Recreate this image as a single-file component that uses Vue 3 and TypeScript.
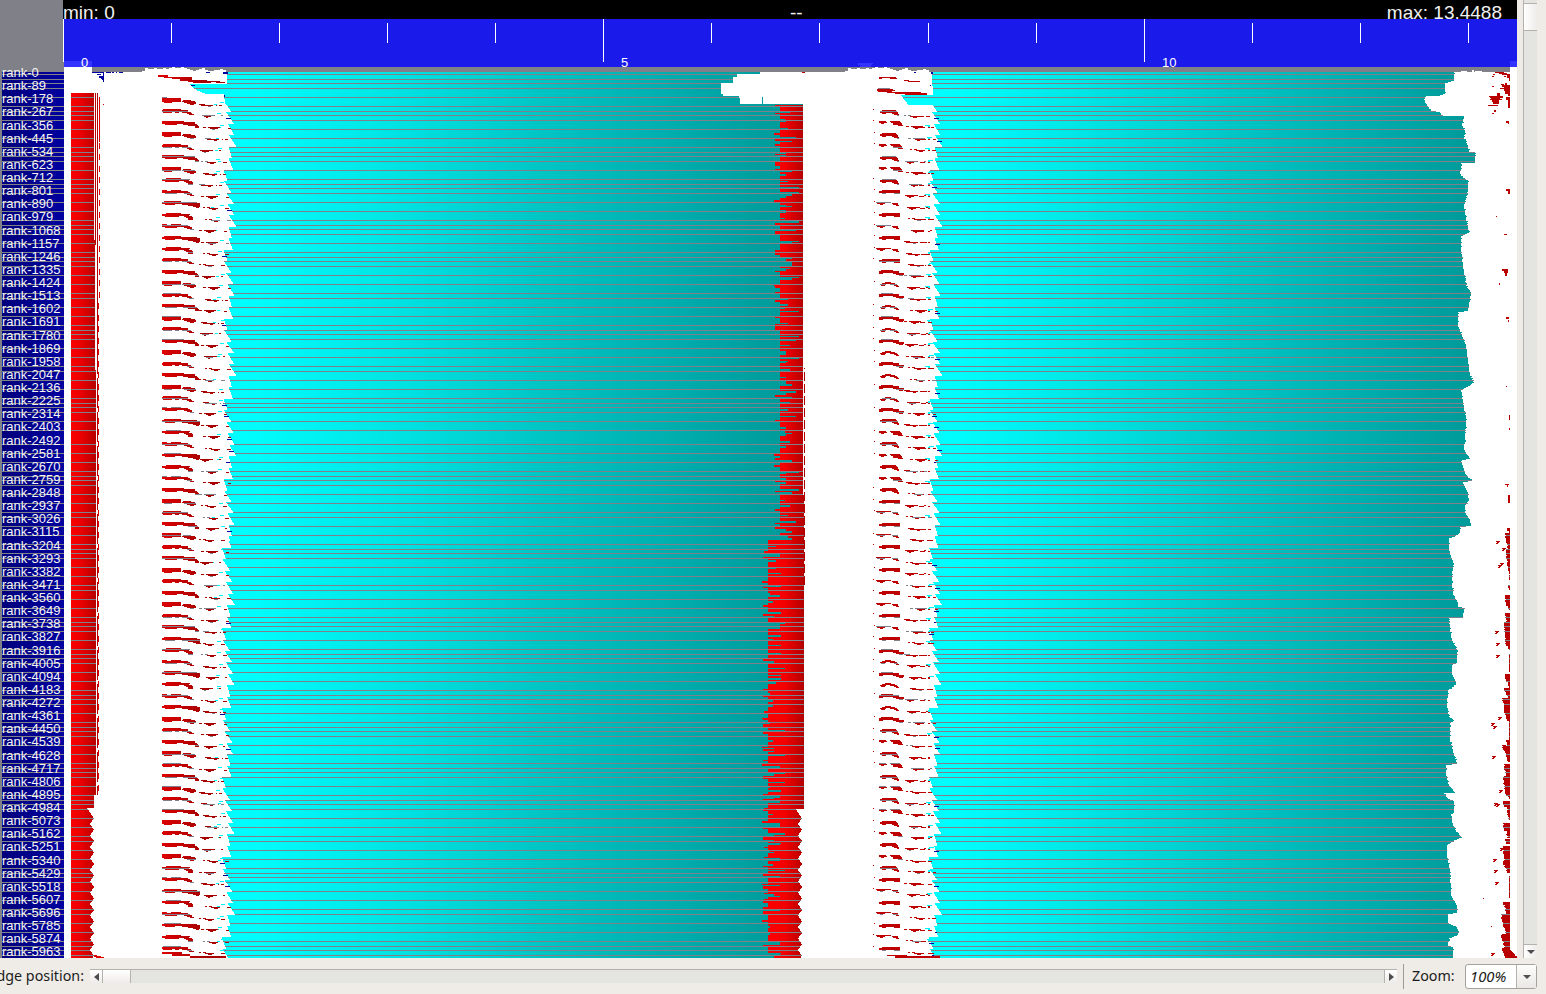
<script setup lang="ts">
type Box = [number, number, number, number]
type Point = [number, number]

const TOP = 72
const BOTTOM = 958
const TOOTH = 11.46

const rankLabels = Array.from({ length: 68 }, (_, i) => `rank-${i * 89}`)

const rows = [
  74, 79, 83, 88, 97, 106, 111, 115, 120, 129, 138, 147, 152, 156, 161, 170, 179, 184, 188, 193, 202, 211, 220, 225,
  229, 234, 243, 252, 257, 261, 266, 275, 284, 293, 298, 307, 316, 325, 330, 334, 339, 348, 357, 366, 371, 380, 389,
  398, 403, 407, 412, 421, 430, 444, 453, 462, 471, 476, 480, 485, 494, 503, 512, 517, 526, 535, 544, 549, 553, 558,
  567, 576, 585, 590, 599, 608, 617, 622, 626, 631, 640, 649, 654, 658, 663, 672, 681, 690, 695, 699, 704, 713, 722,
  727, 731, 736, 745, 754, 763, 768, 772, 777, 786, 795, 800, 804, 809, 818, 827, 836, 841, 850, 859, 868, 873, 877,
  882, 891, 900, 909, 914, 923, 932, 941, 946, 950, 955,
]
const rowSet = new Set(rows)

const ticks = Array.from({ length: 14 }, (_, i) => ({
  x: Math.round(63 + i * 108.065),
  major: i % 5 === 0,
}))
const tickLabels = [
  { x: 81, text: '0' },
  { x: 621, text: '5' },
  { x: 1162, text: '10' },
]

function toPath(boxes: Box[]): string {
  return boxes.map(([x, y, w, h]) => `M${x} ${y}h${w}v${h}h${-w}z`).join('')
}

let seed = 7
function rnd(): number {
  seed = (seed * 16807) % 2147483647
  return seed / 2147483647
}
function pick<T>(items: T[]): T {
  return items[Math.floor(rnd() * items.length)]
}

function interpolate(points: Point[], y: number): number {
  for (let i = 1; i < points.length; i++) {
    const [y0, x0] = points[i - 1]
    const [y1, x1] = points[i]
    if (y < y1) return x0 + ((x1 - x0) * (y - y0)) / (y1 - y0)
  }
  return points[points.length - 1][1]
}

// Sawtooth front where the long cyan intervals start
const teeth: Point[] = [[9, 12.5], [9, 13.5], [4, 8], [4.5, 12], [6.5, 14.5], [8, 15], [9.5, 17]]
function front(y: number): number {
  const position = (y - 140.5) / TOOTH + 66.5
  const k = Math.floor(position)
  const f = position - k
  const phase = Math.floor(((k % 6.65) + 6.65) % 6.65)
  const [a, b] = teeth[phase]
  const drift = y > 540 ? -1.5 : 0
  return Math.round(219.5 + a + (b - a) * f + drift)
}

// Ends of the second cyan phase
const tail: Point[] = [
  [72, 1454], [80, 1454], [81, 1451], [83, 1445], [93, 1445], [95, 1440], [96, 1425], [101, 1424], [105, 1427],
  [110, 1431], [112, 1440], [115, 1442], [116, 1464], [125, 1462], [130, 1465], [138, 1464],
  [143, 1467], [151, 1469], [152, 1475], [162, 1475], [163, 1461], [175, 1460], [180, 1468], [190, 1468],
  [205, 1464], [218, 1466], [232, 1469], [236, 1461], [250, 1461], [265, 1463], [285, 1466], [292, 1471],
  [310, 1468], [312, 1458], [325, 1458], [335, 1462], [345, 1466], [360, 1468], [375, 1470], [382, 1474],
  [390, 1461], [402, 1463], [420, 1466], [450, 1464], [458, 1470], [460, 1461], [475, 1466], [480, 1472],
  [482, 1463], [491, 1467], [500, 1469], [505, 1465], [512, 1465], [520, 1470], [525, 1471], [527, 1460],
  [533, 1459], [536, 1455], [538, 1449], [545, 1449], [556, 1450], [560, 1453], [580, 1452], [595, 1453],
  [600, 1457], [606, 1458], [608, 1464], [617, 1463], [618, 1449], [629, 1450], [640, 1452], [645, 1455],
  [651, 1457], [662, 1457], [664, 1452], [673, 1452], [680, 1455], [684, 1455], [687, 1452], [690, 1448],
  [705, 1447], [716, 1449], [720, 1454], [723, 1450], [740, 1450], [746, 1452], [755, 1454], [763, 1457],
  [765, 1446], [775, 1446], [785, 1449], [792, 1455], [793, 1444], [798, 1448], [801, 1454], [812, 1454],
  [814, 1451], [825, 1453], [832, 1457], [837, 1462], [840, 1454], [845, 1447], [855, 1447], [870, 1450],
  [895, 1451], [905, 1457], [912, 1457], [914, 1448], [923, 1448], [926, 1456], [932, 1459], [935, 1457],
  [938, 1449], [945, 1448], [947, 1453], [958, 1453],
]

const cyanLeft: Box[] = []
const cyanRight: Box[] = []
const redLeft: Box[] = []
const redMiddle: Box[] = []
const redRight: Box[] = []
const fragments: Box[] = []
const cyanBits: Box[] = []
const navyBits: Box[] = []
const grey: Box[] = []

function leftStart(y: number): number {
  if (y < 84) return 227
  if (y < 90) return Math.round(190 + (y - 84) * 1.1)
  if (y < 94) return Math.round(197 + (y - 90) * 2.5)
  return y < 105 ? 224 + Math.floor((y - 94) / 5) : front(y)
}
function leftEnd(y: number): number {
  if (y < 74) return 760
  if (y < 77) return 737
  if (y < 83) return 733
  if (y < 96) return 721 + (y > 93 ? 2 : 0)
  if (y < 105) return y < 98 ? 739 : y < 104 ? 740 : 748
  return 803
}
function rightStart(y: number): number {
  if (y < 86) return 932
  if (y < 95) return 933
  if (y < 105) return Math.round(901 + (y - 95) * 0.8)
  return front(y) + 706 - (y > 540 ? -1 : 0)
}

let jag = 780
let jagLeft = 0
for (let y = TOP; y < BOTTOM; y++) {
  const a = leftStart(y)
  const b = leftEnd(y)
  const c = rightStart(y)
  const d = Math.round(interpolate(tail, y) + (rnd() > 0.82 ? 1 : 0))
  cyanLeft.push([a, y, b - a, 1])
  cyanRight.push([c, y, d - c, 1])

  const wave = Math.abs((((y - 812) / TOOTH) % 1) - 0.5) * 2
  const sawEdge = y < 808 ? 0 : Math.round(4 - wave * 4)
  let leftEdge = 0
  if (y >= 93) {
    leftEdge = y < 240 ? 94 : y < 370 ? 95 : 96
    if (y >= 795) leftEdge = y < 808 ? 94 : 90 + sawEdge
    redLeft.push([71, y, leftEdge - 71, 1])
    if (y < 245) redLeft.push([95, y, 1, 1])
    if (y < 795 && (y < 370 || (y % 34) > 3)) redLeft.push([97, y, 1, 1])
  }

  if (y >= 105) {
    if (jagLeft <= 0) {
      const late = y > 538
      const base = late ? 768 : 780
      const wasBase = jag === base
      jag = wasBase
        ? pick(late ? [762, 764, 770, 773, 776, 781, 785, 763] : [774, 775, 785, 788, 790, 796, 799, 786])
        : pick([base, base, base, base + 6, base + 12, base - 5])
      jagLeft = jag === base ? 2 + Math.floor(rnd() * 5) : 1 + Math.floor(rnd() * 2)
    }
    jagLeft--
    const end = y < 495 ? 803 : y < 809 ? 804 : 798 + sawEdge
    if (end < 803) cyanLeft[cyanLeft.length - 1] = [a, y, end - a, 1]
    redMiddle.push([jag, y, end - jag, 1])
    if (y > 367 && y < 585 && y % 12 < 9) redMiddle.push([804, y, 1, 1])
  }

  if (rowSet.has(y)) {
    const end = y < 105 ? b : y < 495 ? 803 : y < 809 ? 804 : 798 + sawEdge
    grey.push([a, y, end - a, 1], [c, y, d - c, 1])
    if (leftEdge) grey.push([71, y, leftEdge - 71, 1])
  }
}

// Communication bursts, one per tooth
const headShapes: Box[][] = [
  [[0, 0, 19, 1], [0, 1, 19, 3], [2, 4, 8, 1], [21, 2, 8, 1], [20, 3, 13, 1], [22, 4, 12, 1], [25, 5, 9, 1], [28, 6, 4, 1]],
  [[4, 0, 15, 1], [0, 1, 28, 1], [0, 2, 27, 1], [3, 3, 14, 1], [22, 3, 8, 1], [24, 4, 7, 1], [26, 5, 5, 2]],
  [[1, 0, 18, 1], [0, 1, 26, 2], [1, 3, 9, 1], [13, 3, 4, 1], [20, 3, 9, 1], [25, 4, 5, 1], [27, 5, 5, 1]],
  [[0, 0, 5, 1], [9, 0, 10, 1], [0, 1, 26, 1], [0, 2, 28, 1], [3, 3, 12, 1], [22, 3, 8, 1], [25, 4, 5, 1], [28, 5, 4, 1]],
  [[0, 0, 22, 1], [0, 1, 33, 2], [3, 3, 12, 1], [21, 3, 14, 1], [26, 4, 10, 1], [33, 5, 4, 2]],
  [[2, 0, 17, 1], [0, 1, 35, 1], [0, 2, 38, 1], [3, 3, 10, 1], [20, 3, 18, 1], [26, 4, 12, 1], [31, 5, 7, 1], [34, 6, 3, 1]],
]
const middleShapes: Box[][] = [
  [[3, 0, 14, 1], [1, 1, 17, 1], [1, 2, 18, 1], [3, 3, 4, 1], [13, 3, 6, 1], [15, 4, 5, 1], [18, 5, 2, 1]],
  [[6, 0, 6, 1], [3, 1, 13, 1], [1, 2, 6, 1], [11, 2, 7, 1], [2, 3, 4, 1], [15, 3, 4, 1], [17, 4, 3, 1]],
  [[3, 0, 18, 1], [0, 1, 21, 2], [3, 3, 4, 1], [15, 3, 6, 1]],
  [[0, 0, 7, 1], [11, 0, 10, 1], [0, 1, 8, 1], [12, 1, 10, 1], [2, 2, 3, 1], [14, 2, 9, 2], [19, 4, 5, 1]],
  [[2, 0, 12, 1], [0, 1, 20, 2], [0, 3, 4, 1], [14, 3, 11, 1], [17, 4, 8, 1], [20, 5, 4, 1]],
  [[-3, 0, 15, 1], [-2, 1, 8, 1], [1, 2, 3, 1], [13, 1, 6, 1], [14, 2, 5, 1], [17, 3, 3, 1]],
]
const trailShapes: Box[][] = [
  [[0, 0, 6, 1], [2, 1, 5, 1], [7, 1, 7, 1], [9, 2, 3, 1], [17, 1, 1, 1], [20, 1, 3, 1]],
  [[0, 0, 3, 1], [5, 0, 12, 1], [7, 1, 8, 1], [9, 2, 3, 1], [25, 1, 3, 1]],
  [[1, 0, 13, 1], [3, 1, 7, 1], [5, 2, 2, 1], [20, 0, 2, 1]],
  [[0, 0, 2, 1], [4, 0, 3, 1], [6, 1, 9, 1], [9, 2, 4, 1], [22, 1, 4, 1]],
]
function place(shape: Box[], x: number, y: number): void {
  for (const [sx, sy, w, h] of shape) {
    for (let i = 0; i < h; i++) {
      const target = rowSet.has(y + sy + i) ? grey : fragments
      target.push([x + sx, y + sy + i, w, 1])
    }
  }
}
for (let k = 0; k < 75; k++) {
  const y = Math.round(98 + k * TOOTH)
  if (y > 950) break
  const ph = Math.floor(k % 6.65)
  place(headShapes[(ph + k) % 6], 162, y)
  place(pick(trailShapes), 199 + (ph % 4) * 2, y + 6)
  if (rnd() > 0.3) cyanBits.push([216 + Math.floor(rnd() * 6), y + 4, 4, 1])
  if (rnd() > 0.4) cyanBits.push([211 + Math.floor(rnd() * 8), y + 6, 3, 1])
  if (rnd() > 0.75) navyBits.push([front(y + 9) - 4, y + 9, 5, 1])

  const ym = y + 12
  if (ym > 950) break
  place(middleShapes[(ph + 2 * k) % 6], 879, ym)
  place(pick(trailShapes), 904 + (ph % 4) * 2, ym + 5)
  fragments.push([919 + (ph % 3), ym + 6, 5, 1], [928, ym + 6, 2, 1])
  if (rnd() > 0.3) fragments.push([873 + Math.floor(rnd() * 1.6), ym - 1, 1, 1])
  if (rnd() > 0.3) cyanBits.push([925 + Math.floor(rnd() * 5), ym + 4, 5, 1], [928, ym + 5, 2, 1])
  if (rnd() > 0.7) navyBits.push([rightStart(ym + 8) - 2, ym + 8, 5, 1])
  if (y < 790) fragments.push([y < 300 ? 99 : 98, y - 1, 1, 6])
}
fragments.push([99, 98, 1, 44], [103, 104, 1, 1], [158, 75, 10, 2], [164, 77, 28, 1], [172, 78, 20, 1], [180, 79, 12, 1])
fragments.push([180, 80, 27, 1], [188, 81, 32, 1], [193, 82, 18, 1], [216, 82, 9, 1])
fragments.push([879, 77, 17, 1], [879, 78, 3, 1], [890, 78, 7, 1], [904, 80, 5, 1], [908, 81, 12, 1])
fragments.push([877, 89, 16, 1], [877, 90, 18, 1], [878, 91, 14, 1], [887, 92, 34, 1], [895, 93, 32, 1], [905, 94, 22, 1])
fragments.push([802, 72, 3, 1], [190, 956, 36, 2], [162, 952, 20, 2], [172, 954, 18, 2], [887, 955, 20, 1])
fragments.push([895, 956, 45, 2], [93, 955, 4, 1], [94, 956, 7, 1], [96, 957, 8, 1])
grey.push([878, 88, 12, 1], [162, 97, 5, 1])
cyanLeft.push([762, 97, 1, 8], [739, 104, 64, 1])
navyBits.push([92, 72, 12, 1], [97, 74, 4, 1], [99, 76, 4, 2], [101, 78, 3, 1], [102, 79, 2, 1], [103, 80, 1, 2])
navyBits.push([103, 73, 1, 6], [106, 72, 5, 1], [112, 72, 2, 1], [116, 72, 1, 1], [119, 72, 4, 1], [206, 72, 4, 1])
navyBits.push([223, 72, 5, 2], [191, 85, 4, 1], [224, 95, 1, 2], [914, 72, 2, 1], [931, 72, 2, 2], [930, 85, 1, 1])

// Late-running ranks along the right margin
const margin: Box[] = [
  [1495, 72, 9, 1], [1499, 73, 8, 1], [1502, 74, 8, 1], [1507, 75, 3, 3], [1504, 76, 2, 1], [1509, 78, 1, 3],
  [1493, 74, 2, 1], [1492, 76, 2, 1], [1501, 84, 3, 1], [1505, 83, 2, 2], [1502, 85, 8, 2], [1504, 87, 6, 4],
  [1500, 88, 4, 1], [1505, 91, 5, 3], [1508, 94, 2, 2], [1492, 86, 2, 1], [1497, 93, 3, 3], [1489, 96, 12, 1],
  [1490, 97, 13, 1], [1491, 98, 9, 1], [1490, 99, 12, 1], [1492, 100, 7, 2], [1493, 102, 6, 2], [1488, 105, 10, 1],
  [1499, 96, 4, 2], [1506, 97, 4, 3], [1508, 100, 2, 8], [1494, 110, 2, 2], [1492, 113, 2, 1], [1506, 121, 3, 2],
  [1508, 123, 1, 1], [1506, 189, 4, 2], [1508, 191, 2, 3], [1496, 216, 1, 1], [1504, 234, 3, 1],
  [1502, 269, 6, 2], [1504, 271, 4, 2], [1505, 273, 2, 3], [1499, 283, 1, 2], [1506, 317, 3, 2], [1508, 320, 1, 2],
  [1506, 386, 1, 1], [1509, 415, 1, 5], [1509, 428, 1, 2], [1505, 484, 4, 1], [1507, 485, 1, 2], [1508, 495, 2, 8],
]
const runs: [number, number, number][] = [
  [528, 533, 1507], [533, 543, 1505], [543, 552, 1507], [549, 567, 1506], [567, 574, 1508], [575, 580, 1509],
  [585, 590, 1508], [595, 606, 1505], [606, 610, 1508], [613, 622, 1505], [622, 640, 1504], [640, 646, 1505],
  [646, 650, 1508], [654, 672, 1509], [674, 682, 1505], [682, 688, 1508], [688, 692, 1504], [692, 698, 1506],
  [698, 708, 1503], [708, 716, 1504], [716, 721, 1506], [721, 740, 1509], [740, 746, 1506], [746, 753, 1503],
  [753, 762, 1506], [764, 776, 1504], [776, 790, 1503], [790, 796, 1505], [796, 799, 1508], [801, 807, 1503],
  [807, 820, 1507], [823, 831, 1503], [831, 838, 1506], [839, 844, 1505], [846, 860, 1503], [860, 868, 1503],
  [868, 873, 1506], [876, 898, 1509], [902, 907, 1503], [907, 914, 1505], [914, 922, 1501], [922, 930, 1503],
  [930, 934, 1505], [934, 941, 1501], [941, 948, 1503],
]
redRight.push(...margin)
for (const [y0, y1, x] of runs) {
  for (let y = y0; y < y1; y++) {
    const start = Math.min(1509, x + Math.floor(rnd() * 1.3) + Math.floor(((y - y0) / (y1 - y0)) * 1.8))
    redRight.push([start, y, 1510 - start, 1])
    if (rowSet.has(y)) grey.push([start, y, 1510 - start, 1])
  }
}
for (let y = 948; y < 958; y++) redRight.push([1502 + Math.floor((y - 948) / 2.5), y, 8 + Math.floor((y - 948) / 2), 1])
const specks: Point[] = [
  [1496, 541], [1502, 548], [1500, 563], [1498, 565], [1495, 631], [1496, 643], [1496, 655], [1491, 723], [1493, 726],
  [1492, 756], [1499, 790], [1494, 803], [1496, 804], [1494, 870], [1495, 882], [1500, 848], [1493, 859], [1502, 745],
  [1491, 953], [1498, 717], [1502, 698],
]
for (const [x, y] of specks) {
  redRight.push([x, y, 4, 1], [x + 1, y + 1, 2, 1], [x, y + 2, 2, 1])
}
redRight.push([1483, 898, 1, 1], [1491, 926, 1, 1])

// White activity crest overlapping the grey band
const crest: Box[] = []
const crestHeights = [1, 4, 3, 3, 4, 3, 3, 4, 3, 4, 5, 4, 4, 5, 4, 3, 2, 1, 2, 3, 4, 2, 1, 1, 2, 2, 3, 2]
crestHeights.forEach((h, i) => {
  crest.push([142 + i * 3, 72 - h, 3, h], [845 + i * 3, 72 - h, 3, h])
})
crest.push([1461, 71, 6, 1], [1472, 70, 2, 2], [1475, 71, 7, 1])

const slopes = toPath([[64, 67, 28, 5], [1510, 67, 7, 5], ...crest])
const railRows = rows.map((y) => y - TOP)
</script>

<template>
  <div class="window">
    <div class="main">
      <div class="viewer">
        <div class="corner"></div>
        <header class="ruler">
          <div class="range">
            <span class="range-min">min: 0</span>
            <span class="range-mid">--</span>
            <span class="range-max">max: 13.4488</span>
          </div>
        </header>
        <aside class="ranks">
          <svg class="rank-rows" width="62" height="886" shape-rendering="crispEdges">
            <rect v-for="y in railRows" :key="y" x="0" :y="y" width="62" height="1" fill="#808088" />
          </svg>
          <div v-for="label in rankLabels" :key="label" class="rank">{{ label }}</div>
        </aside>
        <div class="canvas"></div>
        <svg class="plot" width="1517" height="958" viewBox="0 0 1517 958" shape-rendering="crispEdges">
          <defs>
            <linearGradient id="cyan-a" gradientUnits="userSpaceOnUse" x1="190" y1="0" x2="803" y2="0">
              <stop offset="0" stop-color="#00ffff" />
              <stop offset="0.1" stop-color="#00fdfd" />
              <stop offset="0.34" stop-color="#00e3e3" />
              <stop offset="0.59" stop-color="#00c3c3" />
              <stop offset="1" stop-color="#009797" />
            </linearGradient>
            <linearGradient id="cyan-b" gradientUnits="userSpaceOnUse" x1="900" y1="0" x2="1475" y2="0">
              <stop offset="0" stop-color="#00ffff" />
              <stop offset="0.1" stop-color="#00fdfd" />
              <stop offset="0.34" stop-color="#00e3e3" />
              <stop offset="0.59" stop-color="#00c5c5" />
              <stop offset="1" stop-color="#009999" />
            </linearGradient>
            <linearGradient id="red-a" gradientUnits="userSpaceOnUse" x1="71" y1="0" x2="98" y2="0">
              <stop offset="0" stop-color="#fa0000" />
              <stop offset="0.4" stop-color="#e80000" />
              <stop offset="1" stop-color="#b00000" />
            </linearGradient>
            <linearGradient id="red-b" gradientUnits="userSpaceOnUse" x1="764" y1="0" x2="805" y2="0">
              <stop offset="0" stop-color="#ff0000" />
              <stop offset="0.5" stop-color="#f40000" />
              <stop offset="1" stop-color="#b00000" />
            </linearGradient>
            <linearGradient id="red-c" gradientUnits="userSpaceOnUse" x1="162" y1="0" x2="202" y2="0">
              <stop offset="0" stop-color="#dc0000" />
              <stop offset="1" stop-color="#a80000" />
            </linearGradient>
          </defs>
          <rect x="64" y="19" width="1453" height="48" fill="#1a1aea" />
          <rect x="64" y="61" width="28" height="6" fill="#3333ff" />
          <rect x="1510" y="61" width="7" height="6" fill="#3333ff" />
          <path d="M858 63h15v1h-1v1h-1v2h-11v-2h-2z" fill="#3333ff" />
          <rect
            v-for="tick in ticks"
            :key="tick.x"
            :x="tick.x"
            :y="tick.major ? 19 : 23"
            width="1"
            :height="tick.major ? 43 : 20"
            fill="#fff"
          />
          <text v-for="mark in tickLabels" :key="mark.text" class="mark" :x="mark.x" y="67">{{ mark.text }}</text>
          <rect x="64" y="67" width="1453" height="5" fill="#808088" />
          <path :d="slopes" fill="#fff" />
          <path :d="toPath(cyanLeft)" fill="url(#cyan-a)" />
          <path :d="toPath(cyanRight)" fill="url(#cyan-b)" />
          <path :d="toPath(redLeft)" fill="url(#red-a)" />
          <path :d="toPath(redMiddle)" fill="url(#red-b)" />
          <path :d="toPath(redRight)" fill="#b80000" />
          <path :d="toPath(cyanBits)" fill="#00f6f6" />
          <path :d="toPath(fragments.filter((f) => f[0] < 240))" fill="url(#red-c)" />
          <path :d="toPath(fragments.filter((f) => f[0] >= 240))" fill="#bf0000" />
          <path :d="toPath(navyBits)" fill="#0000a0" />
          <path :d="toPath(grey)" fill="#80808a" />
        </svg>
      </div>
      <div class="vbar">
        <div class="vthumb"></div>
        <div class="vbutton"><i class="arrow down"></i></div>
      </div>
    </div>
    <footer class="toolbar">
      <div class="position-label"><span>Edge position:</span></div>
      <div class="hbar">
        <div class="hbutton start"><i class="arrow left"></i></div>
        <div class="hthumb"></div>
        <div class="hbutton end"><i class="arrow right"></i></div>
      </div>
      <div class="separator"></div>
      <span class="zoom-label">Zoom:</span>
      <div class="combo">
        <span class="combo-value">100%</span>
        <span class="combo-button"><i class="arrow down"></i></span>
      </div>
    </footer>
  </div>
</template>

<style>
body {
  margin: 0;
  overflow: hidden;
}
</style>

<style scoped>
.window {
  width: 1546px;
  height: 994px;
  overflow: hidden;
  background: #efebe7;
  display: flex;
  flex-direction: column;
}
.main {
  display: flex;
  gap: 6px;
  height: 958px;
}
.viewer {
  position: relative;
  width: 1517px;
  height: 958px;
  display: grid;
  grid-template-columns: 64px 1453px;
  grid-template-rows: 72px 886px;
  background: #808088;
}
.ruler {
  background: #808088;
  margin-left: -1px;
}
.range {
  height: 19px;
  background: #000;
  color: #f0f0f0;
  font: 19px/25px "Liberation Sans", Arial, sans-serif;
  display: grid;
  grid-template-columns: 727px 1fr auto;
  padding-right: 15px;
}
.canvas {
  background: #fff;
}
.plot {
  position: absolute;
  inset: 0;
}
.mark {
  font: 13px "Liberation Sans", Arial, sans-serif;
  fill: #fff;
}
.ranks {
  position: relative;
  margin-left: 2px;
  background: linear-gradient(90deg, #00007c, #0000a0);
}
.rank-rows {
  position: absolute;
  left: 0;
  top: 0;
}
.rank {
  position: relative;
  z-index: 1;
  height: 13.125px;
  top: -6px;
  color: #f4f4f4;
  font: 13px/13.125px "Liberation Sans", Arial, sans-serif;
  white-space: nowrap;
}
.vbar {
  width: 13px;
  height: 958px;
  border-left: 1px solid #b5b1ad;
  background: #e4e4e1;
  display: flex;
  flex-direction: column;
  justify-content: space-between;
}
.vthumb {
  height: 26px;
  margin-top: 3px;
  border-top: 1px solid #b5b1ad;
  border-bottom: 1px solid #b5b1ad;
  background: linear-gradient(90deg, #fff, #eeecea);
}
.vbutton {
  height: 13px;
  border-top: 1px solid #b5b1ad;
  background: linear-gradient(90deg, #fff, #eeecea);
  display: flex;
  align-items: center;
  justify-content: center;
}
.arrow {
  display: block;
  border: 4px solid transparent;
}
.arrow.down {
  border-top-color: #4d4d4d;
  border-bottom-width: 0;
}
.arrow.left {
  border-right: 5px solid #4d4d4d;
  border-left-width: 0;
}
.arrow.right {
  border-left: 5px solid #4d4d4d;
  border-right-width: 0;
}
.toolbar {
  height: 36px;
  display: flex;
  align-items: flex-start;
  color: #1c1c1c;
  font: 14.3px/20px "Noto Sans", sans-serif;
}
.position-label {
  width: 84px;
  margin: 8px 6px 0 0;
  display: flex;
  justify-content: flex-end;
  white-space: nowrap;
}
.position-label span {
  flex: none;
}
.hbar {
  width: 1307px;
  height: 13px;
  margin-top: 11px;
  border-top: 1px solid #b5b1ad;
  background: #e4e4e1;
  display: flex;
}
.hbutton {
  width: 12px;
  background: linear-gradient(#fff, #eeecea);
  display: flex;
  align-items: center;
  justify-content: center;
}
.hbutton.start {
  border-right: 1px solid #b5b1ad;
}
.hbutton.end {
  margin-left: auto;
  border-left: 1px solid #b5b1ad;
}
.hthumb {
  width: 27px;
  border-right: 1px solid #b5b1ad;
  background: linear-gradient(#fff, #eeecea);
}
.separator {
  width: 1px;
  height: 25px;
  margin: 6px 8px 0 6px;
  background: #9d9a96;
}
.zoom-label {
  width: 53px;
  margin-top: 8px;
}
.combo {
  width: 70px;
  height: 23px;
  margin-top: 6px;
  border: 1px solid #a5a19c;
  border-radius: 3px;
  background: #fff;
  display: flex;
}
.combo-value {
  width: 46px;
  padding-left: 4px;
  font-size: 14.8px;
  font-style: italic;
  line-height: 23px;
}
.combo-button {
  flex: 1;
  border-left: 1px solid #b5b1ad;
  background: linear-gradient(#fdfdfc, #eae7e4);
  display: flex;
  align-items: center;
  justify-content: center;
}
</style>
